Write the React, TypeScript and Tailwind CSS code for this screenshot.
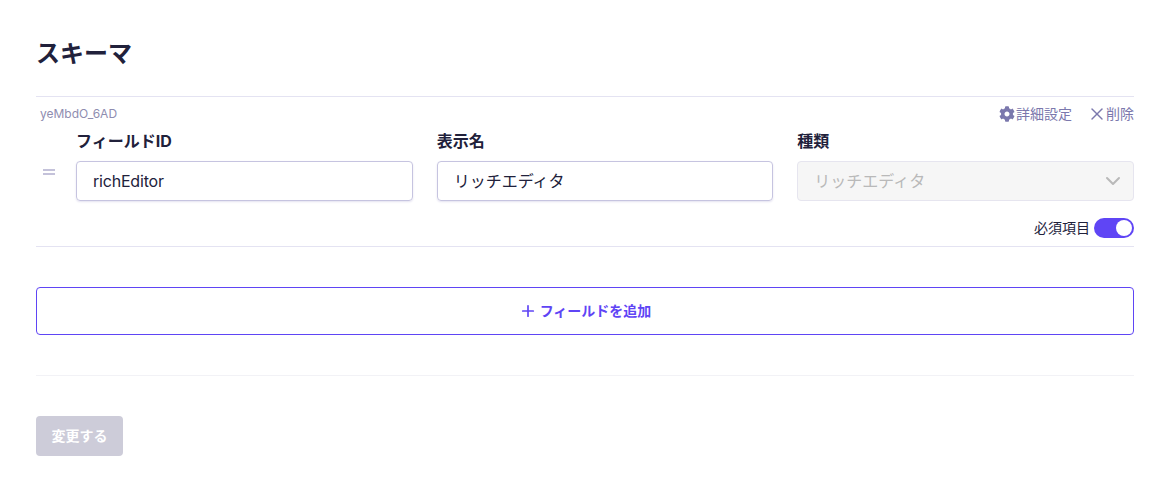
import { ChevronDown, Plus, X } from 'lucide-react';

function Gear() {
  return (
    <svg viewBox="0 0 512 512" className="w-4 h-4 fill-[#7b78ad]">
      <path d="M487.4 315.7l-42.6-24.6c4.3-23.2 4.3-47 0-70.2l42.6-24.6c4.9-2.8 7.1-8.6 5.5-14-11.1-35.6-30-67.8-54.7-94.6-3.8-4.1-10-5.1-14.8-2.3L380.8 110c-17.9-15.4-38.5-27.3-60.8-35.1V25.8c0-5.6-3.9-10.5-9.4-11.7-36.7-8.2-74.3-7.8-109.2 0-5.5 1.2-9.4 6.1-9.4 11.7V75c-22.2 7.9-42.8 19.8-60.8 35.1L88.7 85.5c-4.9-2.8-11-1.9-14.8 2.3-24.7 26.7-43.6 58.9-54.7 94.6-1.7 5.4.6 11.2 5.5 14L67.3 221c-4.3 23.2-4.3 47 0 70.2l-42.6 24.6c-4.9 2.8-7.1 8.6-5.5 14 11.1 35.6 30 67.8 54.7 94.6 3.8 4.1 10 5.1 14.8 2.3l42.6-24.6c17.9 15.4 38.5 27.3 60.8 35.1v49.2c0 5.6 3.9 10.5 9.4 11.7 36.7 8.2 74.3 7.8 109.2 0 5.5-1.2 9.4-6.1 9.4-11.7v-49.2c22.2-7.9 42.8-19.8 60.8-35.1l42.6 24.6c4.9 2.8 11 1.9 14.8-2.3 24.7-26.7 43.6-58.9 54.7-94.6 1.5-5.5-.7-11.3-5.6-14.1zM256 336c-44.1 0-80-35.9-80-80s35.9-80 80-80 80 35.9 80 80-35.9 80-80 80z" />
    </svg>
  );
}

function Field({ label, children }: { label: string; children: React.ReactNode }) {
  return (
    <div className="flex-1 min-w-0">
      <div className="text-base leading-5 font-bold text-[#21213b] mb-[10px]">{label}</div>
      {children}
    </div>
  );
}

export default function App() {
  return (
    <div className="w-[1172px] h-[492px] bg-white pl-9 pr-[38px] pt-[38px] overflow-hidden font-['Inter','Noto_Sans_CJK_JP',sans-serif]">
      <h1 className="text-2xl leading-8 font-bold text-[#21213b] mb-[26px]">スキーマ</h1>

      <div className="border-t border-b border-[#e4e3f2] h-[151px]">
        <div className="flex justify-between items-center pt-[3px] h-[31px]">
          <span className="pl-1 text-xs text-[#8f8db0]">yeMbdO_6AD</span>
          <div className="flex items-center gap-[15px] text-sm text-[#7b78ad]">
            <span className="flex items-center gap-px"><Gear />詳細設定</span>
            <span className="flex items-center">
              <X size={20} strokeWidth={1.75} className="-mr-px" />
              削除
            </span>
          </div>
        </div>
        <div className="flex items-center mt-[3px]">
          <div className="w-10 pl-[7px] pt-3">
            <div className="w-3 h-[6px] border-t-2 border-b-2 border-[#c4c2da]" />
          </div>
          <div className="flex-1 flex gap-6">
            <Field label="フィールドID">
              <div className="h-10 rounded border border-[#c6c4e0] shadow-[0_1px_2px_rgba(80,70,160,0.15)] flex items-center px-4 text-base tracking-[-0.2px] text-[#21213b]">richEditor</div>
            </Field>
            <Field label="表示名">
              <div className="h-10 rounded border border-[#c6c4e0] shadow-[0_1px_2px_rgba(80,70,160,0.15)] flex items-center px-4 text-base text-[#21213b]">リッチエディタ</div>
            </Field>
            <Field label="種類">
              <div className="h-10 rounded border border-[#e6e5ef] bg-[#f6f6f6] flex items-center justify-between pl-4 pr-2 text-base text-[#b9b9b9]">
                リッチエディタ
                <ChevronDown size={24} strokeWidth={2} className="text-[#b9b9b9]" />
              </div>
            </Field>
          </div>
        </div>
        <div className="flex justify-end items-center gap-1 mt-[17px]">
          <span className="text-sm text-[#21213b]">必須項目</span>
          <div className="w-10 h-5 rounded-full bg-[#5f45f5] flex items-center justify-end pr-[2px]">
            <div className="w-4 h-4 rounded-full bg-white" />
          </div>
        </div>
      </div>

      <button className="mt-10 w-full h-12 rounded border border-[#5f45f5] flex items-center justify-center gap-[3px] text-sm font-bold text-[#5f45f5]">
        <Plus size={18} strokeWidth={2.25} />
        フィールドを追加
      </button>

      <div className="mt-10 border-t border-[#f2f2f6]" />

      <button className="mt-10 w-[87px] h-10 rounded bg-[#cdccd9] text-sm font-bold text-white">変更する</button>
    </div>
  );
}
